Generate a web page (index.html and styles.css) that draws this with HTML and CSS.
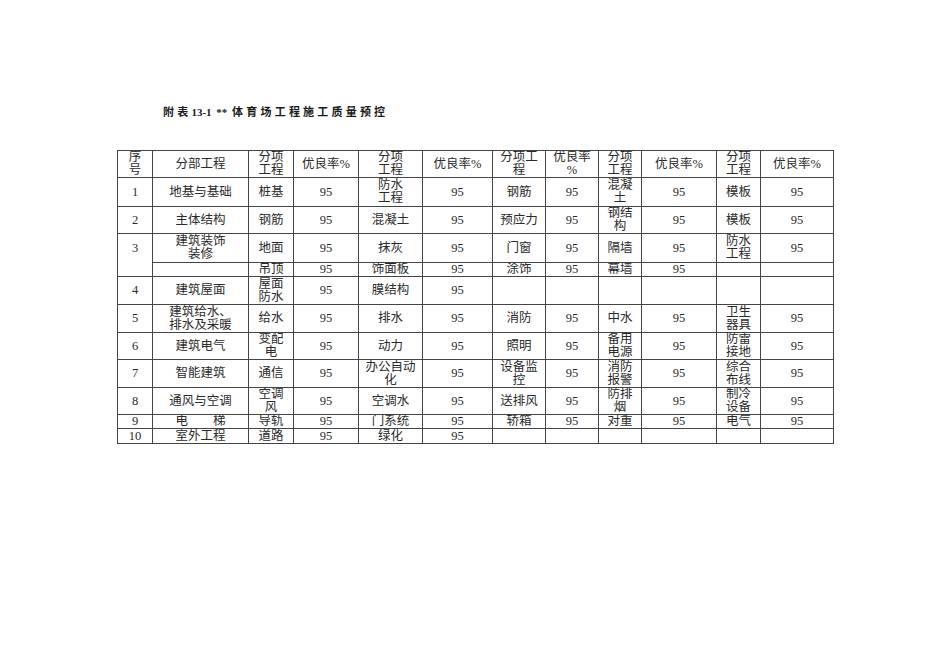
FILE: index.html
```html
<!DOCTYPE html>
<html lang="zh">
<head>
<meta charset="utf-8">
<link rel="stylesheet" href="styles.css">
</head>
<body>
<div class="page">
  <div class="title"><span class="sp">附表</span>13-1 ** <span class="sp">体育场工程施工质量预控</span></div>
  <table class="grid">
    <colgroup>
      <col class="c35"><col class="c96"><col class="c45"><col class="c65"><col class="c64"><col class="c70">
      <col class="c53"><col class="c53"><col class="c43"><col class="c75"><col class="c44"><col class="c73">
    </colgroup>
    <tr class="h27"><td>序<br>号</td><td>分部工程</td><td>分项<br>工程</td><td>优良率%</td><td>分项<br>工程</td><td>优良率%</td><td>分项工<br>程</td><td>优良率<br>%</td><td>分项<br>工程</td><td>优良率%</td><td>分项<br>工程</td><td>优良率%</td></tr>
    <tr class="h29"><td>1</td><td>地基与基础</td><td>桩基</td><td>95</td><td>防水<br>工程</td><td>95</td><td>钢筋</td><td>95</td><td>混凝<br>土</td><td>95</td><td>模板</td><td>95</td></tr>
    <tr class="h27"><td>2</td><td>主体结构</td><td>钢筋</td><td>95</td><td>混凝土</td><td>95</td><td>预应力</td><td>95</td><td>钢结<br>构</td><td>95</td><td>模板</td><td>95</td></tr>
    <tr class="h29"><td rowspan="2" class="top">3</td><td>建筑装饰<br>装修</td><td>地面</td><td>95</td><td>抹灰</td><td>95</td><td>门窗</td><td>95</td><td>隔墙</td><td>95</td><td>防水<br>工程</td><td>95</td></tr>
    <tr class="h13"><td></td><td>吊顶</td><td>95</td><td>饰面板</td><td>95</td><td>涂饰</td><td>95</td><td>幕墙</td><td>95</td><td></td><td></td></tr>
    <tr class="h28"><td>4</td><td>建筑屋面</td><td>屋面<br>防水</td><td>95</td><td>膜结构</td><td>95</td><td></td><td></td><td></td><td></td><td></td><td></td></tr>
    <tr class="h28"><td>5</td><td>建筑给水、<br>排水及采暖</td><td>给水</td><td>95</td><td>排水</td><td>95</td><td>消防</td><td>95</td><td>中水</td><td>95</td><td>卫生<br>器具</td><td>95</td></tr>
    <tr class="h27"><td>6</td><td>建筑电气</td><td>变配<br>电</td><td>95</td><td>动力</td><td>95</td><td>照明</td><td>95</td><td>备用<br>电源</td><td>95</td><td>防雷<br>接地</td><td>95</td></tr>
    <tr class="h28"><td>7</td><td>智能建筑</td><td>通信</td><td>95</td><td>办公自动<br>化</td><td>95</td><td>设备监<br>控</td><td>95</td><td>消防<br>报警</td><td>95</td><td>综合<br>布线</td><td>95</td></tr>
    <tr class="h27"><td>8</td><td>通风与空调</td><td>空调<br>风</td><td>95</td><td>空调水</td><td>95</td><td>送排风</td><td>95</td><td>防排<br>烟</td><td>95</td><td>制冷<br>设备</td><td>95</td></tr>
    <tr class="h14"><td>9</td><td>电　　梯</td><td>导轨</td><td>95</td><td>门系统</td><td>95</td><td>轿箱</td><td>95</td><td>对重</td><td>95</td><td>电气</td><td>95</td></tr>
    <tr class="h15"><td>10</td><td>室外工程</td><td>道路</td><td>95</td><td>绿化</td><td>95</td><td></td><td></td><td></td><td></td><td></td><td></td></tr>
  </table>
</div>
</body>
</html>
```
FILE: styles.css
```css
html, body {
  margin: 0;
  padding: 0;
  background: #ffffff;
}

.page {
  padding: 105px 0 0 117px;
  font-family: "Liberation Serif", "Noto Sans CJK SC", serif;
  color: #2a2a2a;
}

.title {
  padding-left: 46px;
  font-size: 11px;
  line-height: 14px;
  font-weight: bold;
  margin-bottom: 31px;
  white-space: pre;
  word-spacing: 2px;
  color: #1a1a1a;
}

.title .sp {
  letter-spacing: 3.2px;
}

.grid {
  border-collapse: collapse;
  table-layout: fixed;
  width: 716px;
}

.grid td {
  border: 1px solid #444444;
  padding: 0;
  text-align: center;
  vertical-align: middle;
  font-size: 12.5px;
  line-height: 13px;
  white-space: nowrap;
  overflow: hidden;
}

.grid td.top {
  vertical-align: top;
  padding-top: 8px;
}

.c35 { width: 35px; }
.c96 { width: 96px; }
.c45 { width: 45px; }
.c65 { width: 65px; }
.c64 { width: 64px; }
.c70 { width: 70px; }
.c53 { width: 53px; }
.c43 { width: 43px; }
.c75 { width: 75px; }
.c44 { width: 44px; }
.c73 { width: 73px; }

.h27 { height: 27px; }
.h28 { height: 28px; }
.h29 { height: 29px; }
.h13 { height: 13px; }
.h14 { height: 14px; }
.h15 { height: 15px; }
```
